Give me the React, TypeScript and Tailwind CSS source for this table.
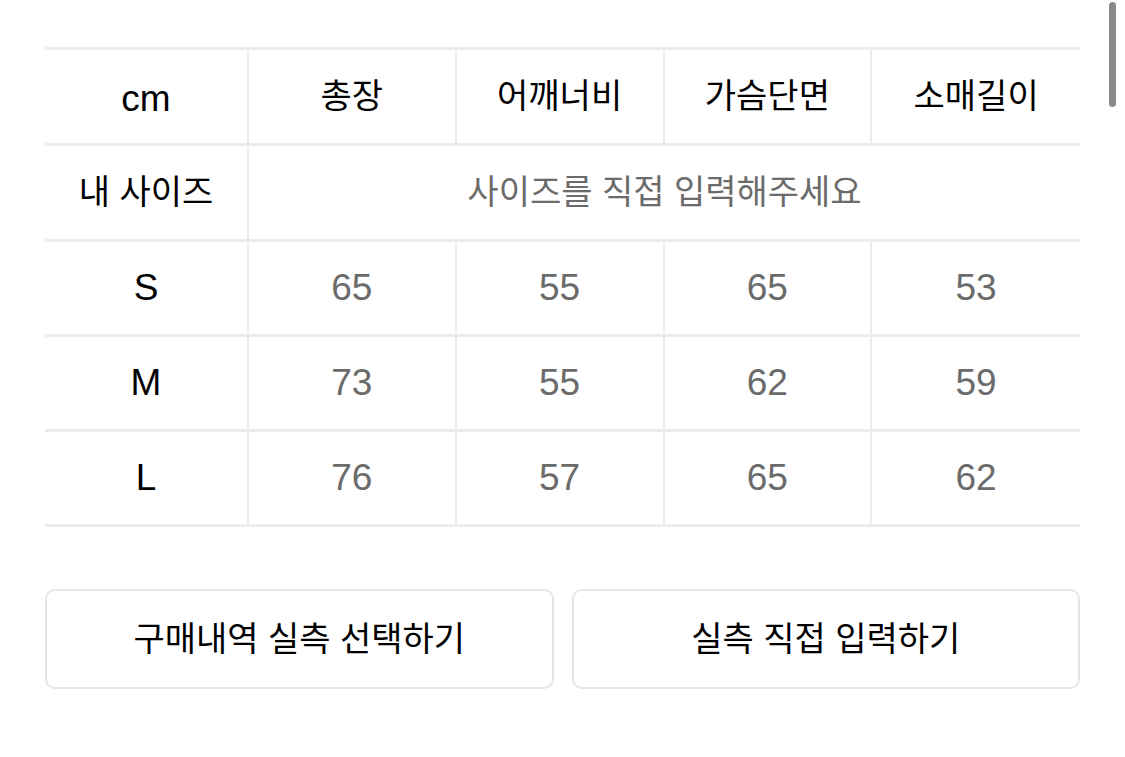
import React from "react";

const cols = ["총장", "어깨너비", "가슴단면", "소매길이"];
const sizes = [
  { name: "S", values: [65, 55, 65, 53] },
  { name: "M", values: [73, 55, 62, 59] },
  { name: "L", values: [76, 57, 65, 62] },
];

const font = { fontFamily: '"Liberation Sans", "Noto Sans CJK KR", sans-serif' };

export default function App() {
  return (
    <div className="relative min-h-[757px] w-full bg-white" style={font}>
      <div className="px-[45px] pt-[47px]">
        {/* size table */}
        <div className="grid grid-cols-[204px_repeat(4,1fr)] border-t-[3px] border-[#ececec]">
          <div className="flex h-[96px] items-center justify-center border-b-[3px] border-r-2 border-[#ececec] pt-1 text-[37px] text-black">
            cm
          </div>
          {cols.map((c, i) => (
            <div
              key={c}
              className={
                "flex h-[96px] items-center justify-center border-b-[3px] border-[#ececec] text-[34px] text-black " +
                (i < 3 ? "border-r-2" : "")
              }
            >
              {c}
            </div>
          ))}

          <div className="flex h-[96px] items-center justify-center border-b-[3px] border-r-2 border-[#ececec] text-[34px] text-black">
            내 사이즈
          </div>
          <div className="col-span-4 flex h-[96px] items-center justify-center border-b-[3px] border-[#ececec] text-[34px] text-[#6b6b6b]">
            사이즈를 직접 입력해주세요
          </div>

          {sizes.map((s) => (
            <React.Fragment key={s.name}>
              <div className="flex h-[95px] items-center justify-center border-b-[3px] border-r-2 border-[#ececec] text-[37px] text-black">
                {s.name}
              </div>
              {s.values.map((v, i) => (
                <div
                  key={i}
                  className={
                    "flex h-[95px] items-center justify-center border-b-[3px] border-[#ececec] text-[37px] text-[#6b6b6b] " +
                    (i < 3 ? "border-r-2" : "")
                  }
                >
                  {v}
                </div>
              ))}
            </React.Fragment>
          ))}
        </div>

        {/* buttons */}
        <div className="mt-[62px] grid grid-cols-2 gap-[18px]">
          <button className="flex h-[100px] items-center justify-center rounded-[10px] border-2 border-[#e6e6e6] bg-white text-[34px] text-black">
            구매내역 실측 선택하기
          </button>
          <button className="flex h-[100px] items-center justify-center rounded-[10px] border-2 border-[#e6e6e6] bg-white text-[34px] text-black">
            실측 직접 입력하기
          </button>
        </div>
      </div>

      {/* overlay scrollbar */}
      <div className="absolute right-[9px] top-[2px] h-[105px] w-[7px] rounded-full bg-[#8a8a8a]" />
    </div>
  );
}
